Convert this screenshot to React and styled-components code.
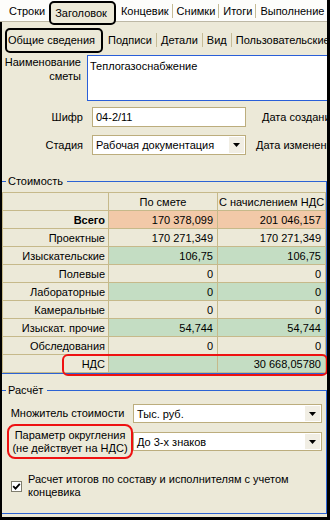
import React from 'react';
import styled, { createGlobalStyle } from 'styled-components';

const GlobalStyle = createGlobalStyle`
  html, body {
    margin: 0;
    padding: 0;
    background: #ece9d8;
  }
  body {
    font-family: "Liberation Sans", Arial, sans-serif;
    font-size: 11px;
    color: #000;
  }
`;

const topTabs = [
  { label: 'Строки' },
  { label: 'Заголовок', active: true },
  { label: 'Концевик' },
  { label: 'Снимки' },
  { label: 'Итоги' },
  { label: 'Выполнение' },
];

const subTabs = [
  { label: 'Общие сведения', active: true },
  { label: 'Подписи' },
  { label: 'Детали' },
  { label: 'Вид' },
  { label: 'Пользовательские' },
];

// tone: o = оранжевый, g = зелёный, '' = фон
const costRows = [
  { name: 'Всего', a: '170 378,099', b: '201 046,157', tone: 'o', bold: true },
  { name: 'Проектные', a: '170 271,349', b: '170 271,349', tone: '' },
  { name: 'Изыскательские', a: '106,75', b: '106,75', tone: 'g' },
  { name: 'Полевые', a: '0', b: '0', tone: '' },
  { name: 'Лабораторные', a: '0', b: '0', tone: 'g' },
  { name: 'Камеральные', a: '0', b: '0', tone: '' },
  { name: 'Изыскат. прочие', a: '54,744', b: '54,744', tone: 'g' },
  { name: 'Обследования', a: '0', b: '0', tone: '' },
  { name: 'НДС', a: '', b: '30 668,05780', tone: 'g' },
];

const toneColor = { o: '#f2c9a8', g: '#c4ddc3', '': 'transparent' };

function Arrow() {
  return (
    <ArrowBox>
      <svg width="7" height="4" viewBox="0 0 7 4">
        <polygon points="0,0 7,0 3.5,4" fill="#000" />
      </svg>
    </ArrowBox>
  );
}

function TabStrip({ tabs, Row, Tab }) {
  return (
    <Row>
      {tabs.map((t, i) => (
        <Tab
          key={t.label}
          $active={t.active}
          $sep={i > 0 && !t.active && !tabs[i - 1].active}
        >
          {t.label}
        </Tab>
      ))}
    </Row>
  );
}

export default function App() {
  return (
    <>
      <GlobalStyle />
      <Window>
        <TabStrip tabs={topTabs} Row={TopRow} Tab={TopTab} />
        <Body>
          <TabStrip tabs={subTabs} Row={SubRow} Tab={SubTab} />

          <NameRow>
            <NameLabel>Наименование<br />сметы</NameLabel>
            <TextArea readOnly value="Теплогазоснабжение" />
          </NameRow>

          <FieldRow $top={6}>
            <FieldLabel>Шифр</FieldLabel>
            <Input>04-2/11</Input>
            <SideLabel $shift={6}>Дата создания</SideLabel>
          </FieldRow>

          <FieldRow $top={8}>
            <FieldLabel>Стадия</FieldLabel>
            <Input>
              Рабочая документация
              <Arrow />
            </Input>
            <SideLabel $shift={0}>Дата изменения</SideLabel>
          </FieldRow>

          <Group $top={20}>
            <GroupTitle>Стоимость</GroupTitle>
            <GroupBody>
              <CostTable>
                <colgroup>
                  <col style={{ width: 106 }} />
                  <col style={{ width: 109 }} />
                  <col />
                </colgroup>
                <thead>
                  <tr>
                    <HeadCell />
                    <HeadCell>По смете</HeadCell>
                    <HeadCell>С начислением НДС</HeadCell>
                  </tr>
                </thead>
                <tbody>
                  {costRows.map((r) => (
                    <tr key={r.name}>
                      <NameCell $bold={r.bold}>{r.name}</NameCell>
                      <NumCell $tone={r.tone}>{r.a}</NumCell>
                      <NumCell $tone={r.tone}>{r.b}</NumCell>
                    </tr>
                  ))}
                </tbody>
              </CostTable>
              <Highlight $left={60} $top={162} $width={266} $height={22} />
            </GroupBody>
          </Group>

          <Group $top={10}>
            <GroupTitle>Расчёт</GroupTitle>
            <CalcBody>
              <CalcGrid>
                <CalcLabel>Множитель стоимости</CalcLabel>
                <Input>
                  Тыс. руб.
                  <Arrow />
                </Input>
                <CalcLabel $marked>
                  Параметр округления<br />(не действует на НДС)
                </CalcLabel>
                <Input>
                  До 3-х знаков
                  <Arrow />
                </Input>
              </CalcGrid>

              <CheckRow>
                <CheckBox>
                  <svg width="9" height="9" viewBox="0 0 9 9">
                    <polyline
                      points="1.2,4.2 3.5,6.6 7.8,1.8"
                      fill="none"
                      stroke="#000"
                      strokeWidth="1.8"
                    />
                  </svg>
                </CheckBox>
                <CheckText>
                  Расчет итогов по составу и исполнителям с учетом<br />концевика
                </CheckText>
              </CheckRow>
            </CalcBody>
          </Group>
        </Body>
      </Window>
    </>
  );
}

// ---------------------------------------------------------------
// Styles
// ---------------------------------------------------------------

const Window = styled.div`
  width: 330px;
  height: 520px;
  box-sizing: border-box;
  border-right: 3px solid #000;
  border-bottom: 3px solid #000;
  background: #ece9d8;
  overflow: hidden;
  display: flex;
  flex-direction: column;
`;

const TopRow = styled.div`
  height: 21px;
  flex-shrink: 0;
  background: #fdfdfb;
  border-bottom: 1px solid #bdb8a5;
  display: flex;
  align-items: center;
  padding-left: 4px;
  white-space: nowrap;
`;

const TopTab = styled.div`
  position: relative;
  z-index: 1;
  display: flex;
  align-items: center;
  box-sizing: border-box;
  line-height: 14px;
  padding: 0 3px 0 4px;
  border-left: 1px solid ${(p) => (p.$sep ? '#c6bc97' : 'transparent')};
  ${(p) =>
    p.$active &&
    `
    align-self: flex-start;
    margin: 1px 0 -4px 1px;
    height: 24px;
    padding: 0 7px 0 4px;
    border: 2px solid #000;
    border-radius: 5px;
    background: #ece9d8;
  `}
`;

const Body = styled.div`
  flex: 1;
  min-height: 0;
  display: flex;
  flex-direction: column;
  border-left: 2px solid #000;
`;

const SubRow = styled.div`
  height: 26px;
  flex-shrink: 0;
  padding: 5px 0 0 3px;
  display: flex;
  align-items: center;
  white-space: nowrap;
`;

const SubTab = styled.div`
  display: flex;
  align-items: center;
  box-sizing: border-box;
  line-height: 14px;
  padding: 0 4px 0 4px;
  border-left: 1px solid ${(p) => (p.$sep ? '#c6bc97' : 'transparent')};
  ${(p) =>
    p.$active &&
    `
    height: 25px;
    padding: 0 6px 0 1px;
    border: 2px solid #000;
    border-radius: 5px;
    background: #ece9d8;
  `}
`;

const NameRow = styled.div`
  display: flex;
  margin-top: 2px;
`;

const NameLabel = styled.div`
  width: 79px;
  flex-shrink: 0;
  text-align: right;
  line-height: 14px;
`;

const TextArea = styled.textarea`
  margin: 0 0 0 6px;
  flex-shrink: 0;
  width: 260px;
  height: 46px;
  box-sizing: border-box;
  border: 1px solid #2a5fd8;
  background: #fff;
  padding: 3px 2px;
  font: inherit;
  line-height: 14px;
  resize: none;
  overflow: hidden;
  outline: none;
`;

const FieldRow = styled.div`
  display: flex;
  align-items: center;
  margin-top: ${(p) => p.$top}px;
  white-space: nowrap;
`;

const FieldLabel = styled.div`
  width: 81px;
  flex-shrink: 0;
  text-align: right;
  margin-right: 9px;
`;

const Input = styled.div`
  display: flex;
  align-items: center;
  box-sizing: border-box;
  flex: 1;
  height: 20px;
  border: 1px solid #bcad7d;
  background: #fff;
  padding-left: 3px;
  white-space: nowrap;

  ${FieldRow} & {
    flex: 0 0 154px;
    width: 154px;
  }
`;

const ArrowBox = styled.div`
  align-self: stretch;
  width: 15px;
  margin: 1px 1px 1px auto;
  background: #f1eee4;
  display: flex;
  align-items: center;
  justify-content: center;
`;

const SideLabel = styled.div`
  flex-shrink: 0;
  margin-left: ${(p) => 10 + p.$shift}px;
`;

const Group = styled.div`
  margin-top: ${(p) => p.$top}px;
  display: flex;
  flex-direction: column;
`;

const GroupTitle = styled.div`
  display: flex;
  height: 13px;
  line-height: 13px;
  white-space: nowrap;

  &::before {
    content: '';
    width: 4px;
    margin: 6px 2px 0 0;
    border-top: 1px solid #2c63d4;
  }

  &::after {
    content: '';
    flex: 1;
    margin: 6px 0 0 4px;
    border-top: 1px solid #2c63d4;
    border-right: 1px solid #2c63d4;
  }
`;

const GroupBody = styled.div`
  position: relative;
  padding-top: 4px;
  border-right: 1px solid #2c63d4;
  border-bottom: 1px solid #2c63d4;
`;

const CostTable = styled.table`
  width: 100%;
  table-layout: fixed;
  border-collapse: collapse;
  border: 1px solid #c6b98a;
`;

const HeadCell = styled.th`
  height: 17px;
  padding: 0;
  font-weight: normal;
  text-align: center;
  border: 1px solid #c6b98a;
  white-space: nowrap;
  overflow: hidden;
`;

const NameCell = styled.td`
  height: 17px;
  padding: 0 3px 0 0;
  text-align: right;
  font-weight: ${(p) => (p.$bold ? 'bold' : 'normal')};
  border: 1px solid #c6b98a;
  white-space: nowrap;
`;

const NumCell = styled.td`
  height: 17px;
  padding: 0 4px 0 0;
  text-align: right;
  background: ${(p) => toneColor[p.$tone]};
  border: 1px solid #c6b98a;
  white-space: nowrap;
`;

const Highlight = styled.div`
  position: absolute;
  left: ${(p) => p.$left}px;
  top: ${(p) => p.$top + 4}px;
  width: ${(p) => p.$width}px;
  height: ${(p) => p.$height}px;
  box-sizing: border-box;
  border: 2px solid #ee1111;
  border-radius: 6px;
  pointer-events: none;
`;

const CalcBody = styled.div`
  padding: 7px 4px 14px 0;
  border-right: 1px solid #2c63d4;
  border-bottom: 1px solid #2c63d4;
`;

const CalcGrid = styled.div`
  display: grid;
  grid-template-columns: 131px 1fr;
  row-gap: 1px;
  align-items: center;

  & > ${Input} {
    height: 19px;
  }
`;

const CalcLabel = styled.div`
  text-align: center;
  line-height: 13px;
  white-space: nowrap;
  ${(p) =>
    p.$marked &&
    `
    justify-self: start;
    margin-left: 5px;
    width: 126px;
    box-sizing: border-box;
    padding: 3px 0 2px;
    border: 2px solid #ee1111;
    border-radius: 8px;
  `}
`;

const CheckRow = styled.div`
  display: flex;
  align-items: center;
  margin-top: 14px;
  padding-left: 9px;
`;

const CheckBox = styled.div`
  width: 11px;
  height: 11px;
  box-sizing: border-box;
  flex-shrink: 0;
  border: 1px solid #7f7d6e;
  background: #fff;
  display: flex;
  align-items: center;
  justify-content: center;
  margin-right: 6px;
`;

const CheckText = styled.div`
  line-height: 13px;
  white-space: nowrap;
`;
